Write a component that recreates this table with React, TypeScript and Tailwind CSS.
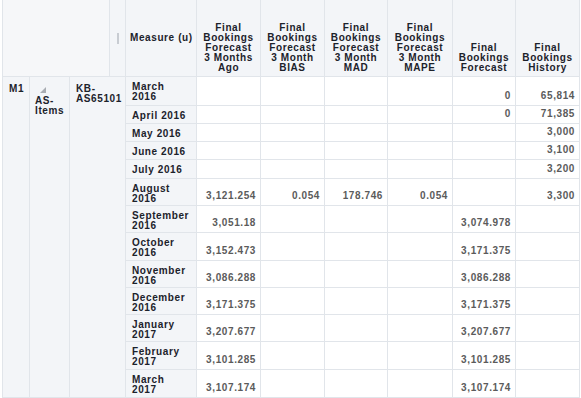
import React from 'react';

type Row = {
  label: string[];
  h: number;
  ago?: string;
  bias?: string;
  mad?: string;
  mape?: string;
  fc?: string;
  hist?: string;
};

const rows: Row[] = [
  { label: ['March', '2016'], h: 29, fc: '0', hist: '65,814' },
  { label: ['April 2016'], h: 18, fc: '0', hist: '71,385' },
  { label: ['May 2016'], h: 18, hist: '3,000' },
  { label: ['June 2016'], h: 18, hist: '3,100' },
  { label: ['July 2016'], h: 19, hist: '3,200' },
  { label: ['August', '2016'], h: 27, ago: '3,121.254', bias: '0.054', mad: '178.746', mape: '0.054', hist: '3,300' },
  { label: ['September', '2016'], h: 27, ago: '3,051.18', fc: '3,074.978' },
  { label: ['October', '2016'], h: 28, ago: '3,152.473', fc: '3,171.375' },
  { label: ['November', '2016'], h: 27, ago: '3,086.288', fc: '3,086.288' },
  { label: ['December', '2016'], h: 27, ago: '3,171.375', fc: '3,171.375' },
  { label: ['January', '2017'], h: 27, ago: '3,207.677', fc: '3,207.677' },
  { label: ['February', '2017'], h: 28, ago: '3,101.285', fc: '3,101.285' },
  { label: ['March', '2017'], h: 28, ago: '3,107.174', fc: '3,107.174' },
];

const headers: string[][] = [
  ['Final', 'Bookings', 'Forecast', '3 Months', 'Ago'],
  ['Final', 'Bookings', 'Forecast', '3 Month', 'BIAS'],
  ['Final', 'Bookings', 'Forecast', '3 Month', 'MAD'],
  ['Final', 'Bookings', 'Forecast', '3 Month', 'MAPE'],
  ['Final', 'Bookings', 'Forecast'],
  ['Final', 'Bookings', 'History'],
];

const line = 'border-r border-b border-[#e1e5ea]';
const label = 'text-[10px] leading-[10px] font-bold text-[#1c222b] tracking-[0.6px]';

const NumCell = ({ v }: { v?: string }) => (
  <div className={`${line} bg-white flex items-end justify-end pr-[4px] pb-[4px] text-[10px] leading-[10px] font-bold text-[#5b5b5b] tracking-[0.6px]`}>
    {v}
  </div>
);

export default function App() {
  return (
    <div className="w-[581px] h-[398px] overflow-hidden bg-white" style={{ fontFamily: '"Liberation Sans", Arial, sans-serif' }}>
      <div
        className="ml-[2px] border-l border-[#e1e5ea] grid grid-cols-[27px_40px_40px_16px_71px_64px_64px_63px_65px_63px_64px]"
        style={{ gridTemplateRows: `77px ${rows.map((r) => r.h + 'px').join(' ')}` }}
      >
        {/* header */}
        <div className={`col-span-3 ${line} bg-[#f6f7f9]`} />
        <div className={`${line} bg-[#f3f5f8] flex items-center justify-center`}>
          <div className="w-[2px] h-[11px] bg-[#c8ccd2]" />
        </div>
        <div className={`${line} bg-[#f3f5f8] flex items-center pl-[4px] ${label}`}>
          Measure (u)
        </div>
        {headers.map((h, i) => (
          <div
            key={i}
            className={`${line} bg-[#f3f5f8] flex flex-col justify-end items-center pb-[3px] text-center ${label}`}
          >
            {h.map((t, j) => (
              <span key={j} className="whitespace-nowrap">{t}</span>
            ))}
          </div>
        ))}

        {/* row dimension cells */}
        <div
          className={`${line} bg-[#f3f5f8] pl-[6px] pt-[7px] ${label}`}
          style={{ gridColumn: '1', gridRow: `2 / span ${rows.length}` }}
        >
          M1
        </div>
        <div
          className={`${line} bg-[#f3f5f8] pl-[5px] pt-[10px] ${label}`}
          style={{ gridColumn: '2', gridRow: `2 / span ${rows.length}` }}
        >
          <svg width="6" height="6" viewBox="0 0 6 6" className="ml-[5px] mb-[3px] block">
            <polygon points="6,0 6,6 0,6" fill="#a9adb3" />
          </svg>
          <div>AS-</div>
          <div>Items</div>
        </div>
        <div
          className={`${line} bg-[#f3f5f8] pl-[6px] pt-[7px] ${label}`}
          style={{ gridColumn: '3 / span 2', gridRow: `2 / span ${rows.length}` }}
        >
          <div>KB-</div>
          <div>AS65101</div>
        </div>

        {rows.map((r, i) => (
          <React.Fragment key={i}>
            <div
              className={`${line} bg-[#f3f5f8] pl-[6px] pt-[5px] ${label}`}
              style={{ gridColumn: '5', gridRow: `${i + 2}` }}
            >
              {r.label.map((t, j) => (
                <div key={j} className="whitespace-nowrap">{t}</div>
              ))}
            </div>
            <NumCell v={r.ago} />
            <NumCell v={r.bias} />
            <NumCell v={r.mad} />
            <NumCell v={r.mape} />
            <NumCell v={r.fc} />
            <NumCell v={r.hist} />
          </React.Fragment>
        ))}
      </div>
    </div>
  );
}
